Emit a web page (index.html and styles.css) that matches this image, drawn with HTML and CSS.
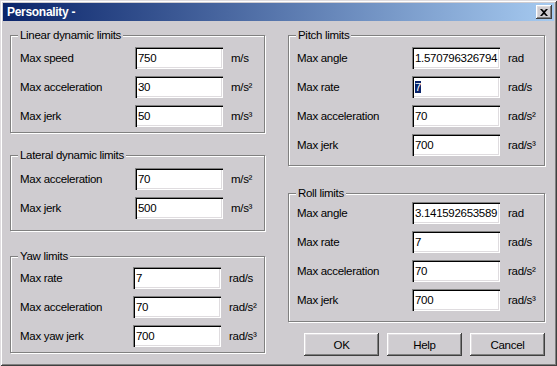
FILE: index.html
```html
<!DOCTYPE html>
<html lang="en">
<head>
    <meta charset="UTF-8">
    <title>Personality</title>
    <link rel="stylesheet" href="styles.css">
</head>
<body>

    <div class="window">
        <div class="titlebar">
            <span class="title">Personality -</span>
            <button class="close-btn">
                <svg width="8" height="7" viewBox="0 0 8 7"><path d="M0 0h2l2 2 2-2h2L5 3.5 8 7H6L4 5 2 7H0l3-3.5z" fill="#000"/></svg>
            </button>
        </div>

        <div class="dialog-body">
            <div class="column column-left">
                <div class="group group-linear">
                    <span class="group-title">Linear dynamic limits</span>
                    <div class="row"><span class="label">Max speed</span><div class="field">750</div><span class="unit">m/s</span></div>
                    <div class="row"><span class="label">Max acceleration</span><div class="field">30</div><span class="unit">m/s²</span></div>
                    <div class="row"><span class="label">Max jerk</span><div class="field">50</div><span class="unit">m/s³</span></div>
                </div>

                <div class="group group-lateral">
                    <span class="group-title">Lateral dynamic limits</span>
                    <div class="row"><span class="label">Max acceleration</span><div class="field">70</div><span class="unit">m/s²</span></div>
                    <div class="row"><span class="label">Max jerk</span><div class="field">500</div><span class="unit">m/s³</span></div>
                </div>

                <div class="group group-yaw">
                    <span class="group-title">Yaw limits</span>
                    <div class="row"><span class="label">Max rate</span><div class="field">7</div><span class="unit">rad/s</span></div>
                    <div class="row"><span class="label">Max acceleration</span><div class="field">70</div><span class="unit">rad/s²</span></div>
                    <div class="row"><span class="label">Max yaw jerk</span><div class="field">700</div><span class="unit">rad/s³</span></div>
                </div>
            </div>

            <div class="column column-right">
                <div class="group group-pitch">
                    <span class="group-title">Pitch limits</span>
                    <div class="row"><span class="label">Max angle</span><div class="field">1.570796326794</div><span class="unit">rad</span></div>
                    <div class="row"><span class="label">Max rate</span><div class="field"><span class="selected">7</span></div><span class="unit">rad/s</span></div>
                    <div class="row"><span class="label">Max acceleration</span><div class="field">70</div><span class="unit">rad/s²</span></div>
                    <div class="row"><span class="label">Max jerk</span><div class="field">700</div><span class="unit">rad/s³</span></div>
                </div>

                <div class="group group-roll">
                    <span class="group-title">Roll limits</span>
                    <div class="row"><span class="label">Max angle</span><div class="field">3.141592653589</div><span class="unit">rad</span></div>
                    <div class="row"><span class="label">Max rate</span><div class="field">7</div><span class="unit">rad/s</span></div>
                    <div class="row"><span class="label">Max acceleration</span><div class="field">70</div><span class="unit">rad/s²</span></div>
                    <div class="row"><span class="label">Max jerk</span><div class="field">700</div><span class="unit">rad/s³</span></div>
                </div>

                <div class="buttons">
                    <button class="btn">OK</button>
                    <button class="btn">Help</button>
                    <button class="btn">Cancel</button>
                </div>
            </div>
        </div>
    </div>

</body>
</html>
```

FILE: styles.css
```css
html, body {
    margin: 0;
    padding: 0;
    background-color: #cfccd0;
    overflow: hidden;
}

.window {
    width: 557px;
    height: 366px;
    box-sizing: border-box;
    padding: 3px;
    background-color: #cfccd0;
    box-shadow: inset 1px 1px 0 #dfdcdf, inset -1px -1px 0 #404040,
                inset 2px 2px 0 #ffffff, inset -2px -2px 0 #808080;
    font-family: "Liberation Sans", Arial, sans-serif;
    font-size: 11.5px;
    letter-spacing: -0.3px;
    color: #000;
}

.titlebar {
    height: 18px;
    display: flex;
    align-items: center;
    justify-content: space-between;
    padding: 0 2px 0 4px;
    background: linear-gradient(to right, #0a246a, #a6caf0);
}

.title {
    color: white;
    font-weight: bold;
    font-size: 12px;
}

.close-btn {
    width: 16px;
    height: 14px;
    padding: 0;
    border: none;
    background-color: #cfccd0;
    display: flex;
    align-items: center;
    justify-content: center;
    box-shadow: inset -1px -1px 0 #404040, inset 1px 1px 0 #ffffff,
                inset -2px -2px 0 #808080, inset 2px 2px 0 #dfdcdf;
}

.dialog-body {
    display: flex;
    gap: 23px;
    padding: 14px 0 0 7px;
}

.column {
    display: flex;
    flex-direction: column;
}

.column-left {
    width: 255px;
}

.column-right {
    width: 257px;
}

.group {
    position: relative;
    box-sizing: border-box;
    border: 1px solid #808080;
    box-shadow: 1px 1px 0 #ffffff, inset 1px 1px 0 #ffffff;
    display: flex;
    flex-direction: column;
    gap: 7px;
    padding-left: 9px;
}

.group-title {
    position: absolute;
    top: -7px;
    left: 7px;
    padding: 0 2px;
    line-height: 13px;
    background-color: #cfccd0;
}

.group-linear {
    height: 98px;
    padding-top: 11px;
}

.group-lateral {
    height: 76px;
    margin-top: 22px;
    padding-top: 12px;
}

.group-yaw {
    height: 97px;
    margin-top: 25px;
    padding-top: 10px;
}

.group-yaw .label {
    width: 113px;
}

.group-pitch {
    height: 131px;
    padding-top: 11px;
    padding-left: 8px;
}

.group-roll {
    height: 129px;
    margin-top: 27px;
    padding-top: 8px;
    padding-left: 8px;
}

.row {
    display: flex;
    align-items: center;
    height: 22px;
}

.label {
    width: 115px;
    flex-shrink: 0;
}

.field {
    width: 88px;
    height: 22px;
    box-sizing: border-box;
    padding-left: 3px;
    line-height: 22px;
    background-color: white;
    white-space: nowrap;
    overflow: hidden;
    box-shadow: inset 1px 1px 0 #808080, inset 2px 2px 0 #000000,
                inset -1px -1px 0 #ffffff, inset -2px -2px 0 #dfdcdf;
}

.selected {
    background-color: #0a246a;
    color: white;
}

.unit {
    margin-left: 8px;
}

.buttons {
    display: flex;
    justify-content: flex-end;
    gap: 8px;
    margin-top: 11px;
}

.btn {
    width: 75px;
    height: 23px;
    padding: 0;
    border: none;
    background-color: #cfccd0;
    font-family: "Liberation Sans", Arial, sans-serif;
    font-size: 11.5px;
    letter-spacing: -0.3px;
    color: #000;
    box-shadow: inset -1px -1px 0 #404040, inset 1px 1px 0 #ffffff,
                inset -2px -2px 0 #808080, inset 2px 2px 0 #dfdcdf;
}
```
